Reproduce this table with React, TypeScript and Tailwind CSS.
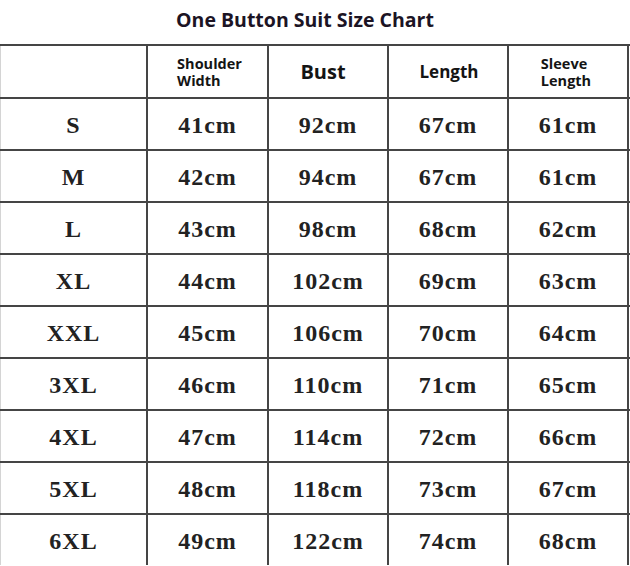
const rows = [
  ['S', '41cm', '92cm', '67cm', '61cm'],
  ['M', '42cm', '94cm', '67cm', '61cm'],
  ['L', '43cm', '98cm', '68cm', '62cm'],
  ['XL', '44cm', '102cm', '69cm', '63cm'],
  ['XXL', '45cm', '106cm', '70cm', '64cm'],
  ['3XL', '46cm', '110cm', '71cm', '65cm'],
  ['4XL', '47cm', '114cm', '72cm', '66cm'],
  ['5XL', '48cm', '118cm', '73cm', '67cm'],
  ['6XL', '49cm', '122cm', '74cm', '68cm'],
];

const sans = { fontFamily: '"Open Sans", "Noto Sans", sans-serif' };

export default function App() {
  return (
    <div className="h-[566px] w-[630px] overflow-hidden bg-white">
      <div
        className="flex h-[44px] items-center justify-center pr-[20px] pb-[4px] text-[19.5px] font-bold text-[#1c1424]"
        style={sans}
      >
        One Button Suit Size Chart
      </div>

      <div className="grid h-[53px] grid-cols-[148px_121px_120px_120px_120px] border-t-2 border-[#454545] text-[#141414]" style={sans}>
        <div className="border-r-2 border-l border-r-[#454545] border-l-[#d4d4d4]" />
        <div className="flex items-center justify-center border-r-2 border-[#454545] pl-[4px]">
          <div className="text-left text-[14.5px] font-bold leading-[17px]">
            Shoulder
            <br />
            Width
          </div>
        </div>
        <div className="flex items-center justify-center border-r-2 border-[#454545] pr-[10px] text-[20px] font-bold">
          Bust
        </div>
        <div className="flex items-center justify-center border-r-2 border-[#454545] pl-[2px] text-[17px] font-bold">
          Length
        </div>
        <div className="flex items-center justify-center border-r-2 border-[#454545] pr-[4px]">
          <div className="text-left text-[14.5px] font-bold leading-[17px]">
            Sleeve
            <br />
            Length
          </div>
        </div>
      </div>

      {rows.map((r) => (
        <div
          key={r[0]}
          className="grid h-[52px] grid-cols-[148px_121px_120px_120px_120px] border-t-2 border-[#454545] text-[24px] font-bold tracking-[1px] text-[#222]"
          style={{ fontFamily: '"Liberation Serif", serif' }}
        >
          {r.map((c, i) => (
            <div
              key={i}
              className={
                i === 0
                  ? 'flex items-center justify-center border-r-2 border-l border-r-[#454545] border-l-[#d4d4d4] pt-[2px]'
                  : 'flex items-center justify-center border-r-2 border-[#454545] pt-[2px]'
              }
            >
              {c}
            </div>
          ))}
        </div>
      ))}
    </div>
  );
}
